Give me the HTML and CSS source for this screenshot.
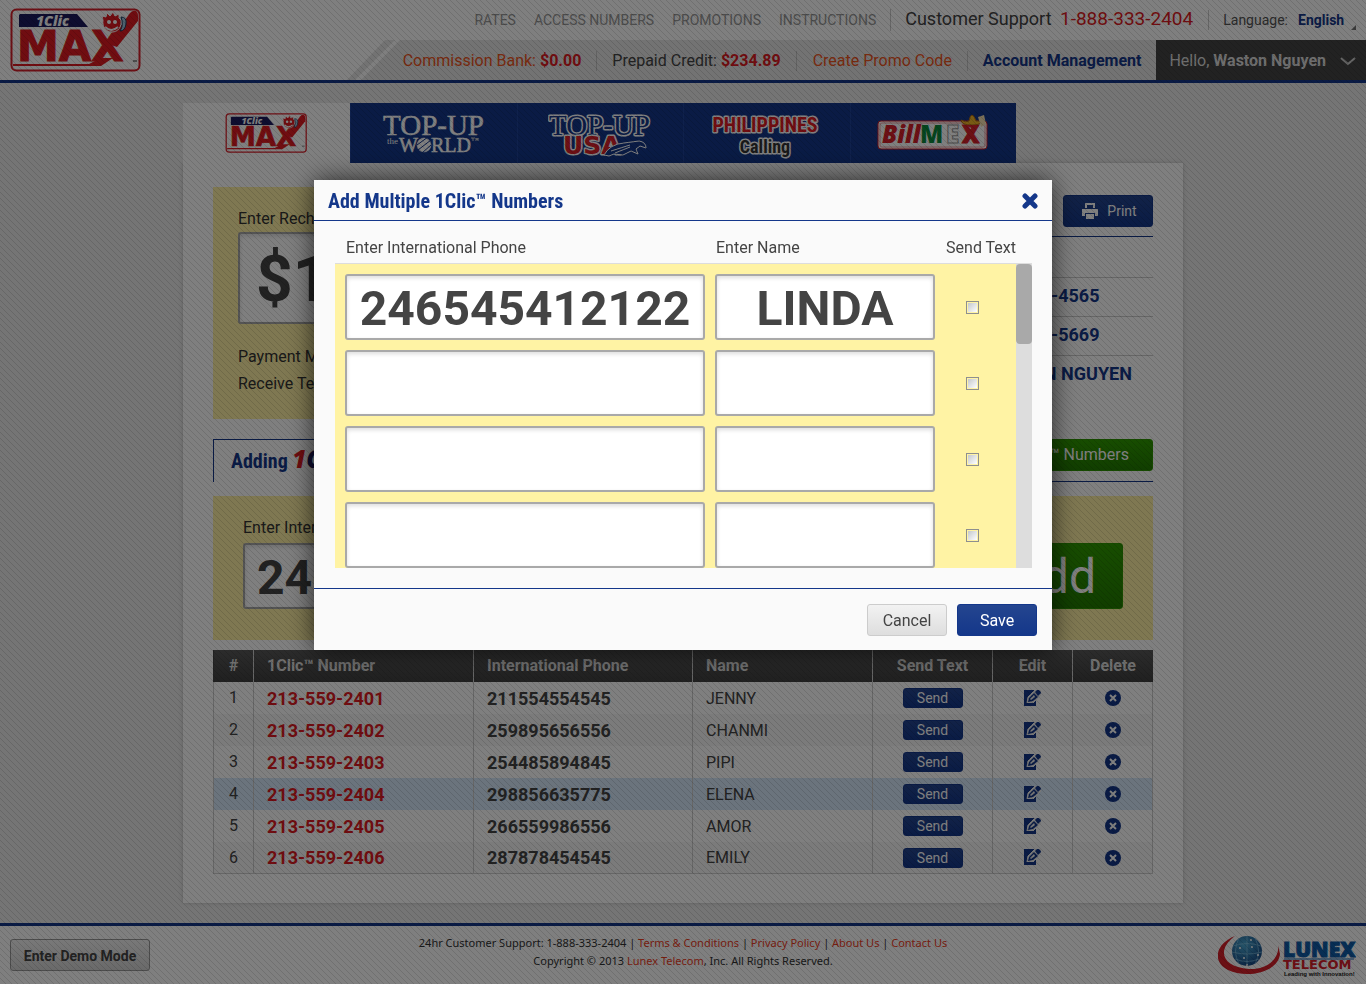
FILE: index.html
```html
<!DOCTYPE html>
<html lang="en">
<head>
<meta charset="utf-8">
<meta name="viewport" content="width=device-width, initial-scale=1">
<title>1Clic Max – Recharge</title>
<link rel="stylesheet" href="styles.css">
</head>
<body>
<svg class="sprite" aria-hidden="true">
  <symbol id="logo-max" viewBox="0 0 132 64">
    <rect x="1.500" y="1.500" width="128" height="61" rx="5" fill="#fff" stroke="#d9202a" stroke-width="2"/>
    <path d="M10 6h57l11 13H9V7z" fill="#1d1a5e"/>
    <text x="26" y="18" class="lg-clic" fill="#fff">1Clic</text>
    <path d="M3 56h76l12-6h12l-12 8H3z" fill="#e01b22"/>
    <text x="7" y="53" class="lg-max" fill="#e01b22" stroke="#e01b22" stroke-width="1">MAX</text>
    <path d="M98 36l22-31q3-3 6-2 2 1 2 5v5l-21 26z" fill="#e01b22"/>
    <path d="M93 12l-1-4 4 1 1-4 3 3 3-4 2 4 4-2v4l2 2c1 7-3 12-9 12s-10-5-9-12z" fill="#e01b22" stroke="#fff" stroke-width="1"/>
    <circle cx="99" cy="14" r="2" fill="#fff"/><circle cx="105" cy="14" r="2" fill="#fff"/>
    <path d="M95 19q6 6 13 0" fill="none" stroke="#fff" stroke-width="2"/>
    <path d="M111 9q6 0 5 7t-6 7q4-6 1-14z" fill="#9fc4dc" stroke="#1d3a5e"/>
    <path d="M123 53h4" stroke="#333" stroke-width="1"/>
  </symbol>
  <symbol id="i-edit" viewBox="0 0 17 17">
    <path d="M0 0h12v16H0z"/>
    <path d="M3 13l1-6 7-7h6v5l-8 8z" stroke="#eee" stroke-width="1" fill="#eee"/>
    <path d="M4 12l1-4 5-5 4 4-5 4z"/><path d="M11 2l2-2q1-1 3 1t0 3l-2 2z"/>
    <path d="M6 9l4-4 1 2-4 3z" fill="#eee"/>
    <path d="M0 13h12v3H0z"/>
  </symbol>
  <symbol id="i-del" viewBox="0 0 16 16">
    <circle cx="8" cy="8" r="8"/><path d="M5 5l6 6M11 5l-6 6" stroke="#fff" stroke-width="2"/>
  </symbol>
</svg>

<header class="site-header">
  <a class="brand" href="#" aria-label="1Clic Max home"><svg width="132" height="64"><use href="#logo-max"/></svg></a>
  <div class="header-rows">
    <nav class="top-nav" aria-label="Main">
      <a href="#">RATES</a><a href="#">ACCESS NUMBERS</a><a href="#">PROMOTIONS</a><a href="#">INSTRUCTIONS</a>
      <span class="support">Customer Support <b>1-888-333-2404</b></span>
      <span class="lang"><label for="lang">Language:</label>
        <select id="lang"><option>English</option></select>
        <svg width="5" height="5" viewBox="0 0 5 5"><path d="M5 0v5H0z" fill="#777"/></svg></span>
    </nav>
    <div class="account">
      <svg class="slash" width="54" height="40" viewBox="0 0 54 40"><path d="M0 40L38 0h10L8 40zM14 40L53 0h1v40z" fill="#e6e6e6"/></svg>
      <div class="account-bar">
        <a class="orange" href="#">Commission Bank: <b>$0.00</b></a>
        <span>Prepaid Credit: <b>$234.89</b></span>
        <a class="orange promo" href="#">Create Promo Code</a>
        <a class="navy" href="#">Account Management</a>
      </div>
      <button class="hello" type="button"><span>Hello, <strong>Waston Nguyen</strong></span>
        <svg width="16" height="9" viewBox="0 0 16 9"><path d="M1 1l7 6 7-6" fill="none" stroke="#ccc" stroke-width="2"/></svg></button>
    </div>
  </div>
</header>

<main class="page">
  <nav class="tabs" aria-label="Products">
    <a class="tab active" href="#" aria-label="1Clic Max"><svg width="83" height="40"><use href="#logo-max"/></svg></a>
    <a class="tab" href="#" aria-label="Top-Up the World"><svg width="104" height="52" viewBox="0 0 104 52">
      <g fill="#fff" stroke="#fff" stroke-width=".5"><text x="1" y="28" class="tl-serif">TOP-UP</text><text x="5" y="37" class="tl-the" stroke="none">the</text><text x="17" y="45" class="tl-world">W</text><text x="49" y="45" class="tl-world">RLD</text>
      <circle cx="42" cy="38" r="7"/></g>
      <path d="M89 31h4M91 31v3M94 34v-3l1 2 1-2v3" fill="none" stroke="#ccc" stroke-width="1"/>
      <path d="M35 38l11-8M36 43l13-10M40 46l9-8" stroke="#14378a" stroke-width="1"/></svg></a>
    <a class="tab" href="#" aria-label="Top-Up USA"><svg width="104" height="54" viewBox="0 0 104 54">
      <text x="1" y="28" class="tl-serif outlined" fill="#14378a">TOP-UP</text>
      <text x="15" y="47" class="tl-usa outlined" fill="#d9202a">USA</text>
      <path d="M56 48q6-11 20-12l15-2q7 1 7 7l-6-2-4 3 2 5-7-3-8 4-9-1-5 2z" fill="#14378a" stroke="#fff" stroke-width="1"/>
      <path d="M63 44l19-6M67 46l15-6" stroke="#fff" stroke-width="1"/></svg></a>
    <a class="tab" href="#" aria-label="Philippines Calling"><svg width="120" height="54" viewBox="0 0 120 54">
      <text x="58" y="25" text-anchor="middle" class="tl-phil outlined" fill="#e01b22">PHILIPPINES</text>
      <text x="58" y="46" text-anchor="middle" class="tl-call outlined" fill="#333">Calling</text></svg></a>
    <a class="tab" href="#" aria-label="BillMex"><svg width="112" height="50" viewBox="0 0 112 50">
      <rect x="1" y="14" width="109" height="28" rx="3" fill="#fff" stroke="#d9202a"/><rect x="3" y="16" width="105" height="24" rx="2" fill="none" stroke="#f0a0a4"/>
      <text x="5" y="36" class="tl-bill" fill="#d9202a">Bill</text><text x="43" y="36" class="tl-mex" fill="#0c8a3c">M</text><text x="69" y="36" class="tl-mex" fill="#fff" stroke="#999" stroke-width="1">E</text><text x="85" y="36" class="tl-mex" fill="#d9202a" stroke="#d9202a" stroke-width="1">X</text>
      <path d="M84 13q5 3 8 1 1-6 3-6t4 6q4 1 8-2-1 6-12 6t-11-5z" fill="#f0b429" stroke="#b06a14"/>
      <path d="M89 18h13l-6 4z" fill="#d9202a"/><path d="M101 10l6-2 2 9-5 3z" fill="#f6e0b0"/></svg></a>
  </nav>

  <div class="card">
    <section class="overview">
      <form class="recharge">
        <label for="amount">Enter Recharge Amount</label>
        <input id="amount" class="amount" value="$10.00">
        <p>Payment Method</p>
        <p>Receive Text</p>
      </form>
      <div class="summary">
        <button class="btn blue print" type="button"><svg width="16" height="16" viewBox="0 0 16 16" fill="#fff"><path d="M3 0h10v5h-2V2H5v3H3z"/><path d="M0 6h16v7h-3v-3H3v3H0z"/><path d="M4 11h8v5H4z"/></svg>Print</button>
        <ul>
          <li></li>
          <li>213-559-4565</li>
          <li>213-559-5669</li>
          <li>WASTON NGUYEN</li>
        </ul>
      </div>
    </section>

    <section class="adding-head">
      <h2>Adding <span class="one">1</span><span class="clic">Clic</span></h2>
      <div class="adding-actions"><button class="btn green" type="button">Add Multiple 1Clic™ Numbers</button></div>
    </section>

    <form class="add-form">
      <div><label for="intl">Enter International Phone</label>
      <input id="intl" class="big-input left" value="246545412122"></div>
      <button class="btn green add" type="button">Add</button>
    </form>

    <table class="numbers">
      <colgroup><col class="c-n"><col class="c-clic"><col class="c-intl"><col><col class="c-send"><col class="c-act"><col class="c-last"></colgroup>
      <thead><tr><th class="mid">#</th><th>1Clic™ Number</th><th>International Phone</th><th>Name</th><th class="mid">Send Text</th><th class="mid">Edit</th><th class="mid">Delete</th></tr></thead>
      <tbody>
        <tr><td class="mid">1</td><td class="red">213-559-2401</td><td class="intl">211554554545</td><td>JENNY</td><td class="mid"><button class="btn blue send" type="button">Send</button></td><td class="mid"><button class="ico" type="button" aria-label="Edit"><svg width="17" height="17"><use href="#i-edit"/></svg></button></td><td class="mid"><button class="ico" type="button" aria-label="Delete"><svg width="16" height="16"><use href="#i-del"/></svg></button></td></tr>
        <tr><td class="mid">2</td><td class="red">213-559-2402</td><td class="intl">259895656556</td><td>CHANMI</td><td class="mid"><button class="btn blue send" type="button">Send</button></td><td class="mid"><button class="ico" type="button" aria-label="Edit"><svg width="17" height="17"><use href="#i-edit"/></svg></button></td><td class="mid"><button class="ico" type="button" aria-label="Delete"><svg width="16" height="16"><use href="#i-del"/></svg></button></td></tr>
        <tr><td class="mid">3</td><td class="red">213-559-2403</td><td class="intl">254485894845</td><td>PIPI</td><td class="mid"><button class="btn blue send" type="button">Send</button></td><td class="mid"><button class="ico" type="button" aria-label="Edit"><svg width="17" height="17"><use href="#i-edit"/></svg></button></td><td class="mid"><button class="ico" type="button" aria-label="Delete"><svg width="16" height="16"><use href="#i-del"/></svg></button></td></tr>
        <tr class="current"><td class="mid">4</td><td class="red">213-559-2404</td><td class="intl">298856635775</td><td>ELENA</td><td class="mid"><button class="btn blue send" type="button">Send</button></td><td class="mid"><button class="ico" type="button" aria-label="Edit"><svg width="17" height="17"><use href="#i-edit"/></svg></button></td><td class="mid"><button class="ico" type="button" aria-label="Delete"><svg width="16" height="16"><use href="#i-del"/></svg></button></td></tr>
        <tr><td class="mid">5</td><td class="red">213-559-2405</td><td class="intl">266559986556</td><td>AMOR</td><td class="mid"><button class="btn blue send" type="button">Send</button></td><td class="mid"><button class="ico" type="button" aria-label="Edit"><svg width="17" height="17"><use href="#i-edit"/></svg></button></td><td class="mid"><button class="ico" type="button" aria-label="Delete"><svg width="16" height="16"><use href="#i-del"/></svg></button></td></tr>
        <tr><td class="mid">6</td><td class="red">213-559-2406</td><td class="intl">287878454545</td><td>EMILY</td><td class="mid"><button class="btn blue send" type="button">Send</button></td><td class="mid"><button class="ico" type="button" aria-label="Edit"><svg width="17" height="17"><use href="#i-edit"/></svg></button></td><td class="mid"><button class="ico" type="button" aria-label="Delete"><svg width="16" height="16"><use href="#i-del"/></svg></button></td></tr>
      </tbody>
    </table>
  </div>
</main>

<footer class="site-footer">
  <button class="demo" type="button">Enter Demo Mode</button>
  <div class="legal">
    <p>24hr Customer Support: 1-888-333-2404 | <a href="#">Terms &amp; Conditions</a> | <a href="#">Privacy Policy</a> | <a href="#">About Us</a> | <a href="#">Contact Us</a></p>
    <p>Copyright © 2013 <a href="#">Lunex Telecom</a>, Inc. All Rights Reserved.</p>
  </div>
  <a class="lunex" href="#" aria-label="Lunex Telecom"><svg width="138" height="46" viewBox="0 0 138 46">
    <defs><radialGradient id="globe" cx=".4" cy=".3" r=".8"><stop offset="0" stop-color="#4aa6d0"/><stop offset="1" stop-color="#12407e"/></radialGradient></defs>
    <path d="M17 1C-3 9-6 27 10 35c18 9 50 3 52-16l-2-9c2 14-12 25-29 24C4 32-2 15 17 1z" fill="#d9202a"/>
    <circle cx="29" cy="16" r="15" fill="url(#globe)"/>
    <path d="M15 11q14-5 28 0M14 17q15 4 30 0M17 24q12 5 24 0M29 1v30M21 3q-7 13 0 26M37 3q7 13 0 26" fill="none" stroke="#8cc8e4" stroke-width="1" opacity=".6"/>
    <g fill="#fff"><circle cx="22" cy="13" r="1"/><circle cx="34" cy="12" r="1"/><circle cx="26" cy="23" r="1"/><circle cx="40" cy="20" r="1"/><circle cx="33" cy="5" r="1"/><circle cx="29" cy="30" r="1"/></g>
    <text x="65" y="22" class="lx-name" fill="#0f5ca8" stroke="#0f5ca8" stroke-width="1">LUNEX</text>
    <path d="M66 24h70" stroke="#0f5ca8" stroke-width="1"/>
    <text x="65" y="34" class="lx-tel" fill="#d9202a">TELECOM</text>
    <text x="66" y="41" class="lx-tag" fill="#222">Leading with Innovation!</text></svg></a>
</footer>

<div class="scrim"></div>

<div class="modal" role="dialog" aria-labelledby="dlg-title">
  <div class="modal-head">
    <h1 id="dlg-title">Add Multiple 1Clic™ Numbers</h1>
    <button class="close" type="button" aria-label="Close"><svg width="16" height="16" viewBox="0 0 16 16"><path d="M3 3l10 10M13 3L3 13" stroke="#14378a" stroke-width="5" stroke-linecap="round"/></svg></button>
  </div>
  <div class="modal-body">
    <div class="row labels"><span id="l-phone">Enter International Phone</span><span id="l-name">Enter Name</span><span id="l-text">Send Text</span></div>
    <div class="scroll">
      <div class="rows">
        <div class="row"><input class="big-input" aria-labelledby="l-phone" value="246545412122"><input class="big-input" aria-labelledby="l-name" value="LINDA"><input type="checkbox" aria-labelledby="l-text"></div>
        <div class="row"><input class="big-input" aria-labelledby="l-phone"><input class="big-input" aria-labelledby="l-name"><input type="checkbox" aria-labelledby="l-text"></div>
        <div class="row"><input class="big-input" aria-labelledby="l-phone"><input class="big-input" aria-labelledby="l-name"><input type="checkbox" aria-labelledby="l-text"></div>
        <div class="row"><input class="big-input" aria-labelledby="l-phone"><input class="big-input" aria-labelledby="l-name"><input type="checkbox" aria-labelledby="l-text"></div>
      </div>
      <div class="track"><div class="thumb"></div></div>
    </div>
  </div>
  <div class="modal-foot">
    <button class="btn grey" type="button">Cancel</button>
    <button class="btn blue" type="button">Save</button>
  </div>
</div>
</body>
</html>
```
FILE: styles.css
```css
* { box-sizing: border-box; }
body { margin: 0; background: #eaeaea; color: #444; font: 16px/20px Roboto, "Liberation Sans", sans-serif; }
h1, h2, p, ul { margin: 0; padding: 0; }
a { text-decoration: none; color: inherit; }
button, input, select { font: inherit; color: inherit; margin: 0; }
button { cursor: pointer; }
svg { display: block; }
.sprite { position: absolute; width: 0; height: 0; }

/* logo lettering */
.lg-clic { font: italic 800 14px "Open Sans", sans-serif; }
.lg-max { font: bold 42px "DejaVu Sans", sans-serif; }
.tl-serif { font: 29px "Liberation Serif", serif; }
.tl-the { font: 9px "Liberation Serif", serif; }
.tl-world { font: 20px "Liberation Serif", serif; }
.tl-usa { font: bold 25px "DejaVu Sans", sans-serif; }
.tl-phil { font: bold 20px "Roboto Condensed", "Liberation Sans Narrow", sans-serif; }
.tl-call { font: bold 18px "Roboto Condensed", "Liberation Sans Narrow", sans-serif; }
.tl-bill { font: italic 800 24px "Open Sans", sans-serif; }
.tl-mex { font: 800 24px "Open Sans", sans-serif; }
.outlined { paint-order: stroke; stroke: #fff; stroke-width: 3px; stroke-linejoin: round; }
.lx-name { font: 800 21px "Open Sans", sans-serif; }
.lx-tel { font: bold 13px "DejaVu Sans", sans-serif; }
.lx-tag { font: bold 6px "Liberation Sans", sans-serif; }

/* header */
.site-header { display: flex; justify-content: space-between; height: 83px; background: #fff; border-bottom: 3px solid #14378a; }
.brand { padding: 8px 0 0 10px; }
.header-rows { display: flex; flex-direction: column; align-items: flex-end; }
.top-nav { display: flex; align-items: center; height: 40px; padding-right: 10px; font-size: 14px; color: #999; white-space: nowrap; }
.top-nav a { margin-right: 18px; }
.top-nav .support { margin-left: -4px; padding: 0 15px 2px 14px; border-left: 1px solid #ccc; font-size: 18px; color: #444; }
.support b { margin-left: 4px; font-size: 19px; font-weight: 400; color: #e01b22; }
.lang { display: flex; align-items: center; padding-left: 14px; border-left: 1px solid #ccc; color: #555; }
.lang select { appearance: none; border: 0; background: none; padding: 0; margin: 0 6px 0 10px; font-weight: 700; color: #14378a; }
.lang svg { align-self: flex-end; }
.account { display: flex; height: 40px; white-space: nowrap; }
.account-bar { display: flex; align-items: center; background: #e6e6e6; padding: 2px 0 0 2px; }
.account-bar > * { padding: 0 15px; border-left: 1px solid #c4c4c4; }
.account-bar > :first-child { padding-left: 0; border-left: 0; }
.account-bar > .promo { padding-left: 16px; }
.account-bar b { color: #e01b22; }
.orange { color: #f0561e; }
.navy { color: #14378a; font-weight: 700; }
.hello { display: flex; align-items: center; gap: 14px; padding: 2px 10px 0 13px; border: 0; background: #444; color: #ddd; }

/* page */
.page { width: 1000px; max-width: 100%; margin: 20px auto; }
.tabs { display: flex; width: 833px; }
.tab { flex: 1; height: 60px; display: flex; justify-content: center; padding-top: 4px; background: #14378a; border-left: 1px solid #1f4298; }
.tab.active { flex: 0 0 167px; background: #fff; border: 0; padding-top: 10px; }
.card { background: #fff; padding: 24px 30px 29px; box-shadow: 0 0 4px #bbb; }
.overview { display: flex; justify-content: space-between; gap: 20px; }
.recharge { width: 620px; height: 232px; padding: 22px 25px; background: #fff1a4; color: #333; }
.recharge label { display: block; margin-bottom: 3px; }
.recharge p { margin-bottom: 7px; }
.recharge .amount { display: block; width: 100%; height: 92px; margin-bottom: 23px; padding: 2px 16px 0; font-size: 64px; font-weight: 700; }
.amount, .big-input { border: 2px solid #a9a9a9; border-radius: 3px; background: #fff; box-shadow: inset 0 2px 4px #ddd; color: #444; }
.big-input { width: 100%; min-width: 0; height: 66px; padding: 2px 8px 0; font-size: 48px; font-weight: 700; text-align: center; }
.big-input.left { width: 360px; padding: 2px 12px 0; text-align: left; }
.summary { flex: 1; padding-top: 8px; display: flex; flex-direction: column; align-items: flex-end; }
.summary ul { width: 100%; list-style: none; margin-top: 9px; padding-top: 2px; border-top: 1px solid #14378a; font-size: 18px; font-weight: 700; color: #14378a; }
.summary li { height: 39px; padding: 8px 0 0 129px; border-bottom: 1px solid #ccc; }
.summary li:last-child { border: 0; }

.btn { display: inline-flex; align-items: center; justify-content: center; height: 32px; padding-top: 2px; border-radius: 3px; border: 1px solid; }
.blue { color: #fff; border-color: #14378a; background: linear-gradient(#24458f, #14378a); }
.green { color: #fff; border-color: #2c9400; background: linear-gradient(#2f9a00, #227c00); }
.grey { color: #444; border-color: #ccc; background: linear-gradient(#f2f2f2, #dedede); }
.print { width: 90px; gap: 9px; padding: 0 5px 0 8px; font-size: 14px; }

.adding-head { display: flex; justify-content: space-between; margin-top: 20px; height: 43px; }
.adding-head h2 { flex: 1; border: solid #14378a; border-width: 1px 0 0 1px; padding: 9px 17px; font: bold 20px/22px "Roboto Condensed", "Liberation Sans Narrow", Roboto, sans-serif; color: #14378a; }
.one, .clic { font: italic 800 24px/20px "Open Sans", sans-serif; }
.one { color: #e01b22; }
.clic { color: #1d1a5e; }
.adding-actions { flex: 1; text-align: right; border-bottom: 1px solid #14378a; }
.adding-actions .btn { padding: 0 23px; }
.add-form { display: flex; justify-content: space-between; margin-top: 14px; height: 144px; padding: 22px 30px; background: #fff1a4; color: #333; }
.add-form label { display: block; margin-bottom: 5px; }
.add { height: 66px; margin-top: 25px; padding: 2px 26px 0; font-size: 48px; }

/* numbers table */
.numbers { width: 100%; margin-top: 10px; table-layout: fixed; border-spacing: 0; }
.c-n { width: 40px; } .c-clic { width: 220px; } .c-intl { width: 219px; } .c-send { width: 120px; } .c-act { width: 80px; } .c-last { width: 81px; }
.numbers th, .numbers td { height: 32px; padding: 0 13px; text-align: left; border-left: 1px solid #ccc; }
.numbers th { background: linear-gradient(#585858, #404040); color: #ddd; font-weight: 700; }
.numbers th:first-child { border-left-color: #444; }
.numbers td:last-child { border-right: 1px solid #ccc; }
.numbers tbody td { padding-top: 1px; }
.numbers tr:last-child td { border-bottom: 1px solid #ccc; }
.numbers tr:nth-child(even) td { background: #f6f6f6; }
.numbers tr.current td { background: #d6e8fa; }
.numbers .mid { padding: 0; text-align: center; }
.numbers .red { font-size: 18px; font-weight: 700; color: #e01b22; }
.numbers .intl { font-size: 18px; font-weight: 700; }
.numbers td .btn, .numbers td .ico { display: flex; margin: 0 auto; }
.send { width: 60px; height: 20px; padding: 0; font-size: 14px; }
.ico { border: 0; padding: 0; background: none; }
.ico svg { fill: #14378a; }

/* footer */
.site-footer { display: grid; grid-template-columns: 1fr auto 1fr; min-height: 61px; padding: 0 10px; background: #fff; border-top: 3px solid #14378a; }
.demo { justify-self: start; width: 140px; height: 32px; margin-top: 13px; padding: 2px 0 0; border: 1px solid #999; border-radius: 3px; background: linear-gradient(#f2f2f2, #d4d4d4); font-size: 14px; font-weight: 700; }
.legal { padding-top: 8px; text-align: center; font: 11px/18px "Noto Sans", "Open Sans", sans-serif; color: #333; }
.legal a { color: #f0401e; }
.lunex { justify-self: end; padding-top: 9px; }

/* overlay and dialog */
.scrim { position: fixed; inset: 0; background: rgba(0,0,0,.5) url("data:image/svg+xml,%3Csvg xmlns='http://www.w3.org/2000/svg' width='6' height='6' shape-rendering='crispEdges'%3E%3Cpath d='M0 0h1v1H0zM1 1h1v1H1zM2 2h1v1H2zM3 3h1v1H3zM4 4h1v1H4zM5 5h1v1H5z' fill='%23000' fill-opacity='.12'/%3E%3C/svg%3E"); }
.modal { position: fixed; top: 180px; left: 0; right: 0; width: 738px; max-width: 100%; margin: 0 auto; background: #fafafa; box-shadow: 0 0 24px rgba(0,0,0,.7); }
.modal-head { display: flex; align-items: center; justify-content: space-between; height: 41px; padding: 2px 14px 0 14px; border-bottom: 1px solid #14378a; }
.modal-head h1 { font: bold 20px/24px "Roboto Condensed", "Liberation Sans Narrow", Roboto, sans-serif; color: #14378a; }
.close { border: 0; background: none; padding: 0; }
.modal-body { padding: 16px 20px 20px 21px; }
.row { display: grid; grid-template-columns: 360px 220px 1fr; gap: 10px; align-items: center; }
.row.labels { height: 26px; padding: 1px 16px 3px 11px; align-items: start; }
.labels span:last-child { justify-self: end; }
.scroll { display: flex; height: 305px; border-top: 1px solid #ddd; overflow: hidden; }
.rows { flex: 1; display: flex; flex-direction: column; gap: 10px; padding: 10px; background: #fff3a4; }
.row input[type=checkbox] { appearance: none; width: 13px; height: 13px; margin-left: 21px; border: 1px solid #8e8f8f; background: linear-gradient(135deg, #c4c8cc, #fff) content-box #f4f4f4; padding: 1px; }
.track { width: 16px; background: #ddd; }
.thumb { height: 80px; border-radius: 4px; background: #a9a9a9; }
.modal-foot { display: flex; justify-content: flex-end; gap: 10px; padding: 15px 15px 14px; border-top: 1px solid #14378a; }
.modal-foot .btn { width: 80px; }
```
